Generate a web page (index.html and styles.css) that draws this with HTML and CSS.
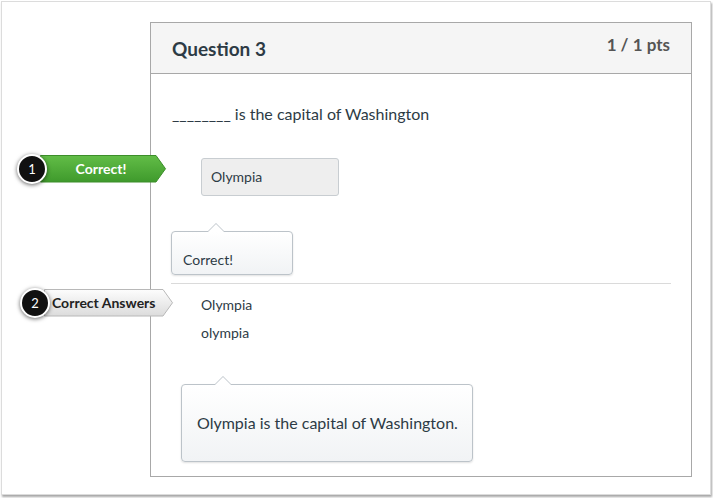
FILE: index.html
```html
<!DOCTYPE html>
<html>
<head>
<meta charset="utf-8">
<link rel="stylesheet" href="styles.css">
</head>
<body>
<div class="frame">
  <div class="card">
    <div class="card-head">
      <div class="title">Question 3</div>
      <div class="pts">1 / 1 pts</div>
    </div>
    <div class="card-body">
      <p class="question">________ is the capital of Washington</p>
      <div class="answer-box">Olympia</div>
      <div class="tip tip-small">Correct!</div>
      <div class="sep"></div>
      <div class="answers">
        <div class="ans">Olympia</div>
        <div class="ans">olympia</div>
      </div>
      <div class="tip tip-large">Olympia is the capital of Washington.</div>
    </div>
  </div>
</div>

<div class="callout callout-1">
  <svg class="tag" width="127" height="28" viewBox="0 0 127 28">
    <defs>
      <linearGradient id="g1" x1="0" y1="0" x2="0" y2="1">
        <stop offset="0" stop-color="#62bd47"/>
        <stop offset="1" stop-color="#3f9a2c"/>
      </linearGradient>
    </defs>
    <path d="M0.5 0.5 H116 L125.5 13.75 L116 27 H0.5 Z" fill="url(#g1)" stroke="#3c8e2a"/>
  </svg>
  <span class="tag-text tag-text-green">Correct!</span>
</div>
<div class="badge badge-1">1</div>

<div class="callout callout-2">
  <svg class="tag" width="130" height="28" viewBox="0 0 130 28">
    <defs>
      <linearGradient id="g2" x1="0" y1="0" x2="0" y2="1">
        <stop offset="0" stop-color="#fdfdfd"/>
        <stop offset="1" stop-color="#dcdcdc"/>
      </linearGradient>
    </defs>
    <path d="M0.5 0.5 H119 L128.5 13.75 L119 27 H0.5 Z" fill="url(#g2)" stroke="#b8b8b8"/>
  </svg>
  <span class="tag-text tag-text-gray">Correct Answers</span>
</div>
<div class="badge badge-2">2</div>
</body>
</html>
```
FILE: styles.css
```css
html, body {
  margin: 0;
  padding: 0;
  background: #fff;
}
body {
  position: relative;
  width: 713px;
  height: 498px;
  overflow: hidden;
  font-family: Lato, "Liberation Sans", sans-serif;
  color: #2d3b45;
}
.frame {
  box-sizing: border-box;
  width: 710px;
  height: 494px;
  margin: 1px;
  border: 1px solid #dcdcdc;
  box-shadow: 1px 2px 2px rgba(0, 0, 0, 0.35);
  padding: 20px 0 0 148px;
}
.card {
  box-sizing: border-box;
  width: 542px;
  height: 455px;
  border: 1px solid #a8a8a8;
}
.card-head {
  box-sizing: border-box;
  height: 51px;
  background: #f5f5f5;
  border-bottom: 1px solid #a8a8a8;
  display: flex;
  justify-content: space-between;
  align-items: flex-start;
  padding: 14px 21px 0 21px;
}
.title {
  font-size: 19px;
  font-weight: 700;
  line-height: 24px;
}
.pts {
  font-size: 17px;
  font-weight: 700;
  line-height: 16px;
  color: #555;
}
.card-body {
  padding: 30px 20px 0 21px;
  display: flex;
  flex-direction: column;
  align-items: flex-start;
}
.question {
  margin: 0;
  font-size: 16px;
  line-height: 20px;
}
.answer-box {
  box-sizing: border-box;
  width: 138px;
  height: 38px;
  margin: 34px 0 0 29px;
  background: #eeeeee;
  border: 1px solid #c8cdd1;
  border-radius: 3px;
  font-size: 14px;
  line-height: 36px;
  padding-left: 9px;
}
.tip {
  position: relative;
  box-sizing: border-box;
  background: linear-gradient(#ffffff, #f1f3f5);
  border: 1px solid #bcc3c9;
  border-radius: 4px;
  box-shadow: 0 1px 2px rgba(0, 0, 0, 0.12);
}
.tip::before,
.tip::after {
  content: "";
  position: absolute;
  width: 0;
  height: 0;
  border-style: solid;
  border-color: transparent;
}
.tip::before {
  top: -9px;
  border-width: 0 9px 9px 9px;
  border-bottom-color: #bcc3c9;
}
.tip::after {
  top: -8px;
  border-width: 0 8px 8px 8px;
  border-bottom-color: #ffffff;
}
.tip-small {
  width: 122px;
  height: 44px;
  margin: 35px 0 0 -1px;
  padding: 19px 0 0 11px;
  font-size: 14px;
  line-height: 18px;
}
.tip-small::before { left: 35px; }
.tip-small::after { left: 36px; }
.sep {
  width: 500px;
  height: 1px;
  background: #dadada;
  margin: 8px 0 0 -1px;
}
.answers {
  margin: 7px 0 0 29px;
}
.ans {
  font-size: 14px;
  line-height: 28px;
}
.tip-large {
  width: 292px;
  height: 78px;
  margin: 37px 0 0 9px;
  padding: 0 0 0 15px;
  display: flex;
  align-items: center;
  font-size: 16px;
  line-height: 20px;
}
.tip-large::before { left: 32px; }
.tip-large::after { left: 33px; }

.callout {
  position: absolute;
  height: 28px;
  display: flex;
  align-items: center;
}
.callout-1 { left: 40px; top: 155px; width: 127px; }
.callout-2 { left: 44px; top: 289px; width: 130px; }
.tag {
  position: absolute;
  left: 0;
  top: 0;
}
.tag-text {
  position: relative;
  font-size: 14px;
  font-weight: 700;
  line-height: 28px;
}
.tag-text-green {
  color: #fff;
  width: 118px;
  text-align: center;
  padding-left: 2px;
}
.tag-text-gray {
  color: #222;
  padding-left: 8px;
}
.badge {
  position: absolute;
  box-sizing: border-box;
  width: 30px;
  height: 30px;
  border-radius: 50%;
  background: #111;
  border: 2px solid #fff;
  box-shadow: 0 1px 4px rgba(0, 0, 0, 0.6);
  color: #fff;
  font-size: 13px;
  line-height: 26px;
  text-align: center;
}
.badge-1 { left: 17px; top: 154px; }
.badge-2 { left: 20px; top: 288px; }
```
